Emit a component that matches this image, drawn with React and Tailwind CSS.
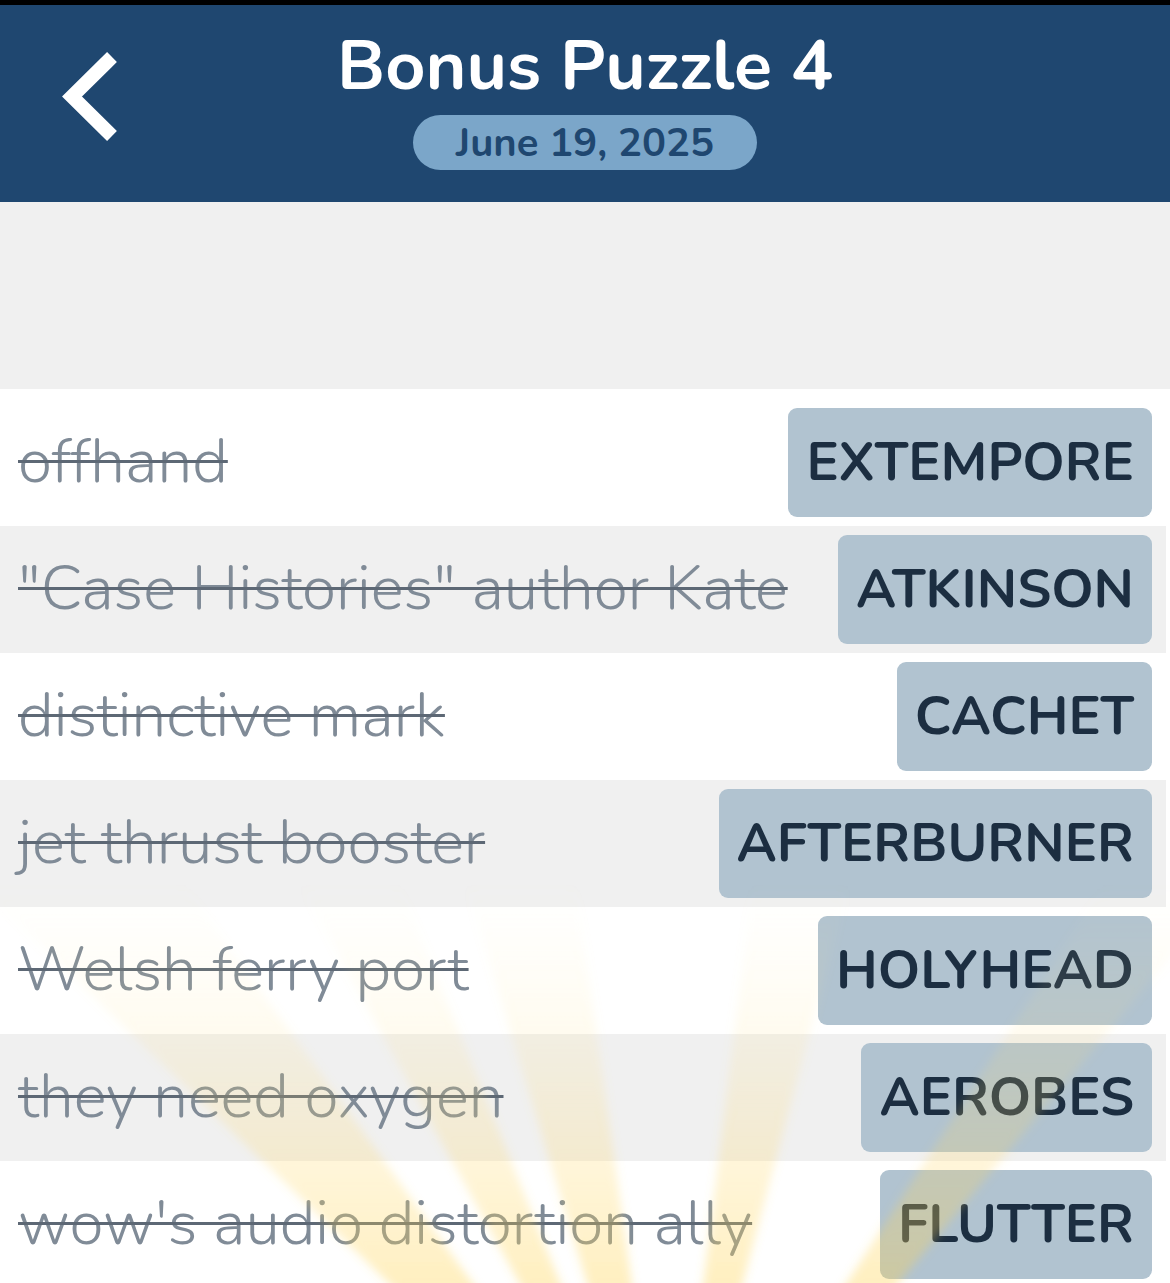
import React from "react";

const clues = [
  { clue: "offhand", answer: "EXTEMPORE" },
  { clue: "\"Case Histories\" author Kate", answer: "ATKINSON" },
  { clue: "distinctive mark", answer: "CACHET" },
  { clue: "jet thrust booster", answer: "AFTERBURNER" },
  { clue: "Welsh ferry port", answer: "HOLYHEAD" },
  { clue: "they need oxygen", answer: "AEROBES" },
  { clue: "wow's audio distortion ally", answer: "FLUTTER" },
];

function Rays() {
  // soft sunburst glow over the lower rows
  const cx = 670;
  const cy = 1550;
  const rays = [
    [-46, -36],
    [-29, -22],
    [-17, -8],
    [7, 15],
    [33, 40],
  ];
  const len = 1000;
  const pt = (deg) => {
    const r = (deg * Math.PI) / 180;
    return `${cx + Math.sin(r) * len},${cy - Math.cos(r) * len}`;
  };
  return (
    <svg className="pointer-events-none absolute inset-0 h-full w-full" viewBox="0 0 1170 1283" preserveAspectRatio="none">
      <defs>
        <linearGradient id="glow" x1="0" y1="1283" x2="0" y2="880" gradientUnits="userSpaceOnUse">
          <stop offset="0" stopColor="#ffd24f" stopOpacity="0.36" />
          <stop offset="0.5" stopColor="#ffda70" stopOpacity="0.17" />
          <stop offset="1" stopColor="#ffe9a8" stopOpacity="0" />
        </linearGradient>
        <filter id="soft" x="-20%" y="-20%" width="140%" height="140%">
          <feGaussianBlur stdDeviation="5" />
        </filter>
      </defs>
      <g filter="url(#soft)">
        {rays.map(([a, b], i) => (
          <polygon key={i} points={`${cx},${cy} ${pt(a)} ${pt(b)}`} fill="url(#glow)" />
        ))}
      </g>
    </svg>
  );
}

export default function App() {
  return (
    <div className="relative min-h-[1283px] overflow-hidden bg-[#fafafa]" style={{ fontFamily: "Nunito, Lato, 'Open Sans', sans-serif" }}>
      <header className="grid h-[202px] grid-cols-[1fr_auto_1fr] border-t-[5px] border-black bg-[#1f4770]">
        <div className="flex items-start pl-[56px] pt-[46px]">
          <svg width="64" height="92" viewBox="0 0 64 92" fill="none">
            <path d="M51 11 L16 45.5 L51 80" stroke="white" strokeWidth="14" strokeLinecap="square" strokeLinejoin="miter" />
          </svg>
        </div>
        <div className="flex flex-col items-center pt-[20px]">
          <h1 className="text-[70px] font-bold leading-[82px] text-white">Bonus Puzzle 4</h1>
          <div className="mt-[8px] flex h-[55px] w-[344px] items-center justify-center rounded-full bg-[#7ba6c9] text-[40px] font-bold text-[#1f4770]">
            June 19, 2025
          </div>
        </div>
        <div />
      </header>

      <div className="h-[187px] bg-[#f0f0f0]" />

      <div className="bg-white pt-[10px]">
        {clues.map((c, i) => (
          <div
            key={c.answer}
            className={`mr-[4px] flex h-[127px] items-center justify-between gap-[40px] pl-[18px] pr-[14px] ${i % 2 === 1 ? "bg-[#f0f0f0]" : "bg-white"}`}
          >
            <span className="whitespace-nowrap text-[62px] font-light leading-[1.3] text-[#808b97] line-through decoration-[#5d6875] decoration-[3px]">
              {c.clue}
            </span>
            <span className="flex h-[109px] shrink-0 items-center rounded-[9px] bg-[#b1c3d0] px-[18px] text-[54px] font-bold text-[#1c2e41]">
              {c.answer}
            </span>
          </div>
        ))}
      </div>

      <Rays />
    </div>
  );
}
